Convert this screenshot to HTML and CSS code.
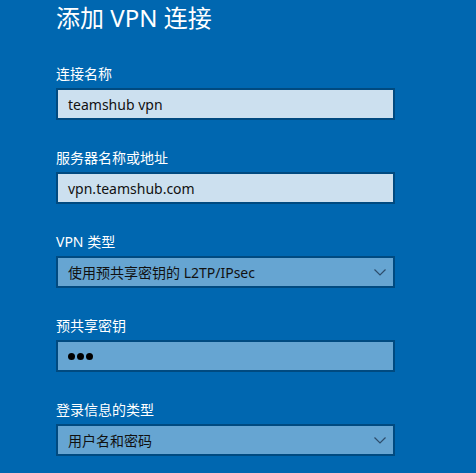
FILE: index.html
```html
<!DOCTYPE html>
<html lang="zh-CN">
<head>
<meta charset="utf-8">
<link rel="stylesheet" href="styles.css">
</head>
<body>
<div class="page">
  <h1 class="title">添加 VPN 连接</h1>
  <div class="field">
    <div class="label">连接名称</div>
    <div class="box text">teamshub vpn</div>
  </div>
  <div class="field">
    <div class="label">服务器名称或地址</div>
    <div class="box text">vpn.teamshub.com</div>
  </div>
  <div class="field">
    <div class="label">VPN 类型</div>
    <div class="box select"><span>使用预共享密钥的 L2TP/IPsec</span>
      <svg class="chev" width="12" height="7" viewBox="0 0 12 7"><path d="M0.5 0.5 L6 6 L11.5 0.5" fill="none" stroke="#2e4d6b" stroke-width="1.2"/></svg>
    </div>
  </div>
  <div class="field">
    <div class="label">预共享密钥</div>
    <div class="box select"><span class="dots" aria-label="•••"><i></i><i></i><i></i></span></div>
  </div>
  <div class="field">
    <div class="label">登录信息的类型</div>
    <div class="box select"><span>用户名和密码</span>
      <svg class="chev" width="12" height="7" viewBox="0 0 12 7"><path d="M0.5 0.5 L6 6 L11.5 0.5" fill="none" stroke="#2e4d6b" stroke-width="1.2"/></svg>
    </div>
  </div>
</div>
</body>
</html>
```

FILE: styles.css
```css
html, body {
  margin: 0;
  padding: 0;
  background: #0067b0;
}
body {
  font-family: "Noto Sans", "Noto Sans CJK SC", sans-serif;
  color: #fff;
}
.page {
  padding: 2px 56px 0 56px;
  display: flex;
  flex-direction: column;
}
.title {
  margin: 0;
  font-weight: 400;
  font-size: 24px;
  line-height: 32px;
  font-family: "Noto Sans", "Noto Sans CJK SC", sans-serif;
}
.field {
  display: flex;
  flex-direction: column;
  gap: 4px;
  width: 339px;
}
.title + .field {
  margin-top: 30px;
}
.field + .field {
  margin-top: 28px;
}
.label {
  font-size: 14px;
  line-height: 20px;
}
.box {
  box-sizing: border-box;
  height: 32px;
  border: 2px solid #004a80;
  padding: 0 10px;
  display: flex;
  align-items: center;
  justify-content: space-between;
  font-size: 14px;
  color: #111;
}
.text {
  background: #cce0ef;
}
.select {
  background: #66a5d2;
}
.chev {
  margin-right: -3px;
}
.dots {
  display: flex;
  gap: 2px;
}
.dots i {
  display: block;
  width: 7px;
  height: 7px;
  border-radius: 50%;
  background: #000;
}
```
